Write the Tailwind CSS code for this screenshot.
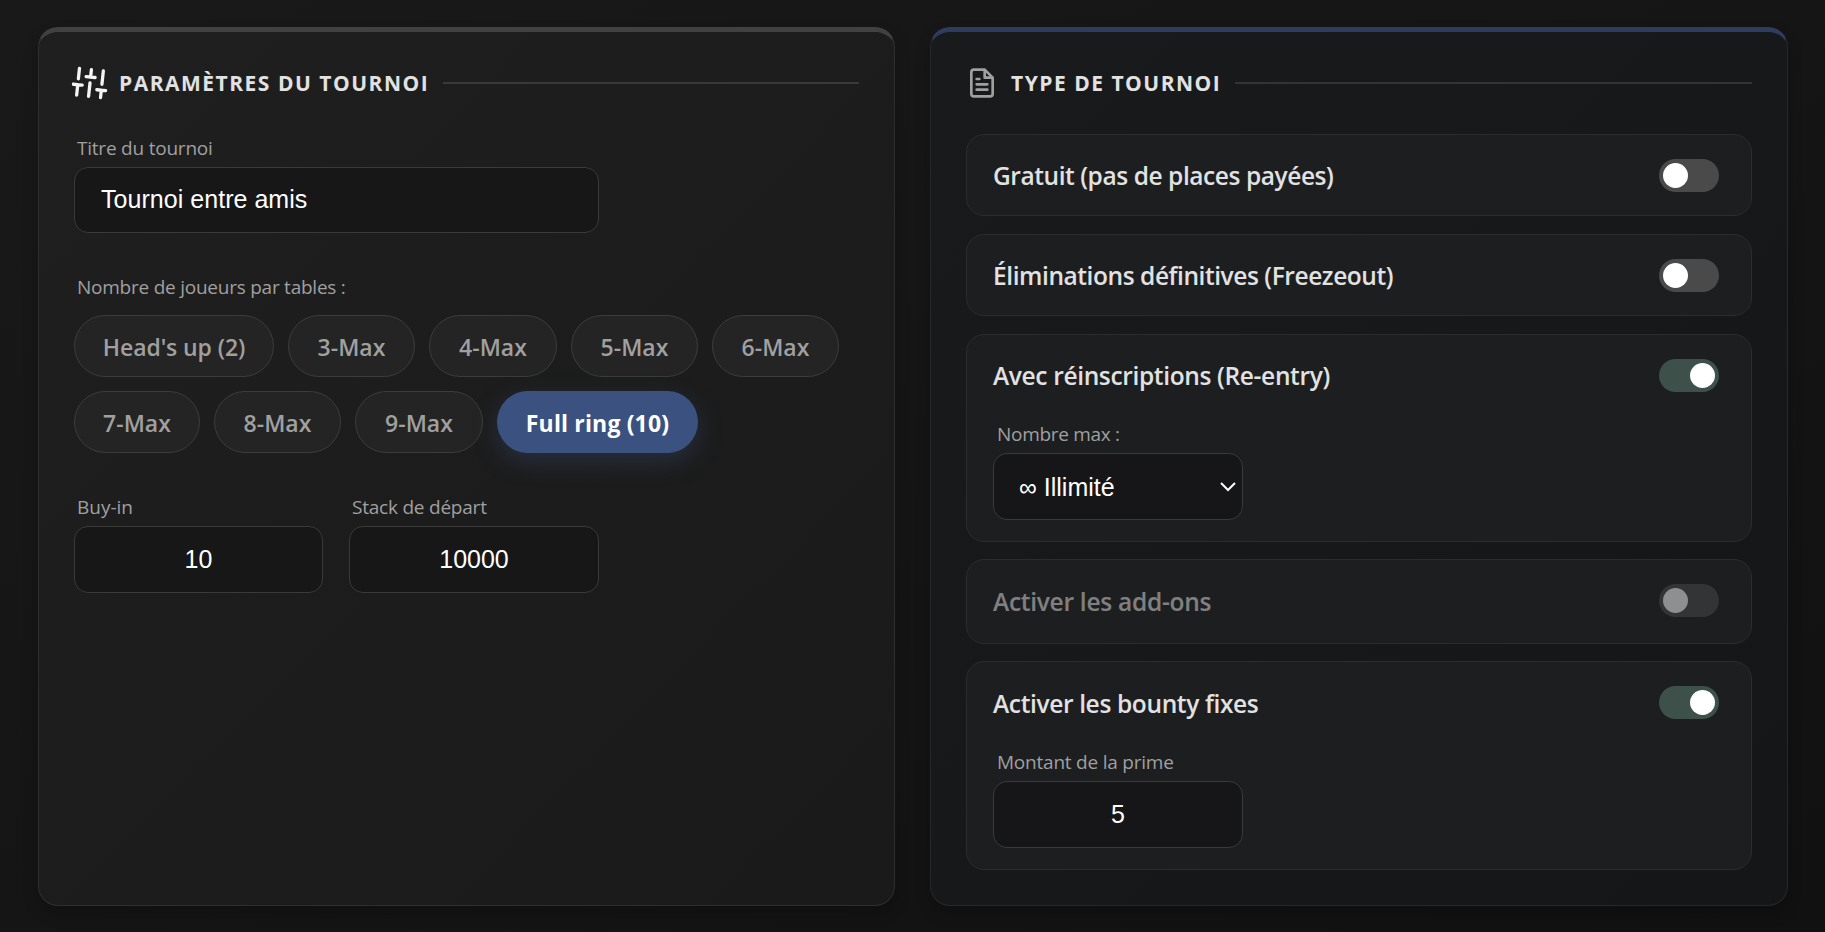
<!DOCTYPE html>
<html lang="fr">

<head>
    <meta charset="UTF-8">
    <meta name="viewport" content="width=device-width, initial-scale=1.0">
    <title>Paramètres du tournoi</title>
    <script src="https://cdn.jsdelivr.net/npm/@tailwindcss/browser@4"></script>
</head>

<body class="w-[1825px] h-[932px] overflow-hidden bg-linear-to-br from-[#191919] to-[#111111] font-['Open_Sans','Noto_Sans',sans-serif] text-[#e2e2e2] whitespace-nowrap">
    <main class="flex gap-[35px] pt-[27px] pl-[38px]">

        <!--Paramètres-->
        <section class="w-[857px] h-[879px] rounded-[20px] border border-t-[5px] border-[#2e2e2e] border-t-[#414141] bg-linear-to-br from-[#1f1f1f] to-[#1a1a1a] px-[35px] pt-[31px] shadow-[0_8px_16px_rgba(0,0,0,0.2)]">
            <div class="flex items-center h-10 mb-[31px]">
                <svg class="w-9 h-9 -ml-0.5 mr-[11px] rotate-6" viewBox="0 0 24 24" fill="none" stroke="#f4f4f4" stroke-width="2.2" stroke-linecap="round">
                    <path d="M4 21v-7M4 10V3M12 21v-9M12 8V3M20 21v-5M20 12V3M1 14h6M9 8h6M17 16h6" />
                </svg>
                <h2 class="pt-0.5 text-[21px] font-bold tracking-[1.5px]">PARAMÈTRES DU TOURNOI</h2>
                <div class="flex-1 h-0.5 ml-[14px] bg-[#393939]"></div>
            </div>

            <label class="block h-7 leading-7 mb-[5px] pl-[3px] text-[19px] tracking-[-0.22px] text-[#a0a0a0]">Titre du tournoi</label>
            <div class="flex items-center w-[525px] h-[66px] rounded-[14px] border border-[#3a3a3a] bg-[#171717] pl-[26px] pb-px font-['Liberation_Sans',sans-serif] text-[25px] tracking-[0.04px] text-white">Tournoi entre amis</div>

            <label class="block h-7 leading-7 mt-10 mb-[14px] pl-[3px] text-[19px] tracking-[-0.24px] text-[#a0a0a0]">Nombre de joueurs par tables :</label>
            <div class="flex flex-col gap-[14px] text-[23px] font-semibold text-[#a0a0a0]">
                <div class="flex gap-[14px] *:flex *:items-center *:justify-center *:h-[62px] *:pt-0.5 *:rounded-full *:border *:border-[#3c3c3c] *:bg-[#242424]">
                    <div class="w-[200px] tracking-[-0.1px]">Head's up (2)</div>
                    <div class="w-[127px]">3-Max</div>
                    <div class="w-[128px]">4-Max</div>
                    <div class="w-[127px]">5-Max</div>
                    <div class="w-[127px]">6-Max</div>
                </div>
                <div class="flex gap-[14px] *:flex *:items-center *:justify-center *:h-[62px] *:pt-0.5 *:rounded-full">
                    <div class="w-[126px] border border-[#3c3c3c] bg-[#242424]">7-Max</div>
                    <div class="w-[127px] border border-[#3c3c3c] bg-[#242424]">8-Max</div>
                    <div class="w-[128px] border border-[#3c3c3c] bg-[#242424]">9-Max</div>
                    <div class="w-[201px] bg-[#3b5280] font-bold text-white tracking-[0.15px] shadow-[0_8px_24px_rgba(59,82,128,0.35)]">Full ring (10)</div>
                </div>
            </div>

            <div class="flex gap-[26px] mt-10">
                <div>
                    <label class="block h-7 leading-7 mb-[5px] pl-[3px] text-[19px] text-[#a0a0a0]">Buy-in</label>
                    <div class="flex items-center justify-center w-[249px] h-[67px] rounded-[14px] border border-[#3a3a3a] bg-[#171717] font-['Liberation_Sans',sans-serif] text-[25px] text-white">10</div>
                </div>
                <div>
                    <label class="block h-7 leading-7 mb-[5px] pl-[3px] text-[19px] tracking-[-0.22px] text-[#a0a0a0]">Stack de départ</label>
                    <div class="flex items-center justify-center w-[250px] h-[67px] rounded-[14px] border border-[#3a3a3a] bg-[#171717] font-['Liberation_Sans',sans-serif] text-[25px] text-white">10000</div>
                </div>
            </div>
        </section>

        <!--Type-->
        <section class="w-[858px] h-[879px] rounded-[20px] border border-t-[5px] border-[#26282c] border-t-[#2f3c60] bg-linear-to-br from-[#191a1c] to-[#151618] px-[35px] pt-[31px] shadow-[0_8px_16px_rgba(0,0,0,0.2)]">
            <div class="flex items-center h-10 mb-[31px]">
                <svg class="w-8 h-8 mr-[13px]" viewBox="0 0 24 24" fill="none" stroke="#a0a0a0" stroke-width="2" stroke-linecap="round" stroke-linejoin="round">
                    <path d="M14 2H6a2 2 0 0 0-2 2v16a2 2 0 0 0 2 2h12a2 2 0 0 0 2-2V8zM14 2v6h6M16 13H8M16 17H8M10 9H8" />
                </svg>
                <h2 class="pt-0.5 text-[21px] font-bold tracking-[1.5px]">TYPE DE TOURNOI</h2>
                <div class="flex-1 h-0.5 ml-[14px] bg-[#333436]"></div>
            </div>

            <div class="h-[82px] mb-[18px] rounded-[18px] border border-[#2b2c2e] bg-[#1d1e20] pt-6 pl-[26px] pr-8">
                <div class="flex items-center justify-between h-[33px] text-[24.5px] font-semibold tracking-[-0.43px]">
                    <span class="pt-0.5">Gratuit (pas de places payées)</span>
                    <div class="flex items-center w-[60px] h-[33px] rounded-full bg-[#4a4a4b] px-1"><i class="size-[25px] rounded-full bg-white"></i></div>
                </div>
            </div>

            <div class="h-[82px] mb-[18px] rounded-[18px] border border-[#2b2c2e] bg-[#1d1e20] pt-6 pl-[26px] pr-8">
                <div class="flex items-center justify-between h-[33px] text-[24.5px] font-semibold tracking-[-0.43px]">
                    <span class="pt-0.5">Éliminations définitives (Freezeout)</span>
                    <div class="flex items-center w-[60px] h-[33px] rounded-full bg-[#4a4a4b] px-1"><i class="size-[25px] rounded-full bg-white"></i></div>
                </div>
            </div>

            <div class="h-[208px] mb-[17px] rounded-[18px] border border-[#2b2c2e] bg-[#1d1e20] pt-6 pl-[26px] pr-8">
                <div class="flex items-center justify-between h-[33px] text-[24.5px] font-semibold tracking-[-0.35px]">
                    <span class="pt-0.5">Avec réinscriptions (Re-entry)</span>
                    <div class="flex items-center justify-end w-[60px] h-[33px] rounded-full bg-[#3d5049] px-1"><i class="size-[25px] rounded-full bg-white"></i></div>
                </div>
                <label class="block h-7 leading-7 mt-7 mb-[5px] pl-1 text-[19px] tracking-[-0.3px] text-[#a0a0a0]">Nombre max :</label>
                <div class="flex items-center justify-between w-[250px] h-[67px] rounded-[14px] border border-[#3a3a3b] bg-[#161618] pt-0.5 pl-[25px] pr-1.5 font-['Liberation_Sans',sans-serif] text-[25px] text-white">
                    <span>∞ Illimité</span>
                    <svg class="w-4 h-[10px] mb-0.5" viewBox="0 0 16 10" fill="none" stroke="#fff" stroke-width="2">
                        <path d="M1 1l7 7 7-7" />
                    </svg>
                </div>
            </div>

            <div class="h-[85px] mb-[17px] rounded-[18px] border border-[#2b2c2e] bg-[#1d1e20] pt-6 pl-[26px] pr-8">
                <div class="flex items-center justify-between h-[33px] text-[24.5px] font-semibold tracking-[-0.27px] opacity-50">
                    <span class="pt-1">Activer les add-ons</span>
                    <div class="flex items-center w-[60px] h-[33px] rounded-full bg-[#4a4a4b] px-1"><i class="size-[25px] rounded-full bg-white"></i></div>
                </div>
            </div>

            <div class="h-[209px] rounded-[18px] border border-[#2b2c2e] bg-[#1d1e20] pt-6 pl-[26px] pr-8">
                <div class="flex items-center justify-between h-[33px] text-[24.5px] font-semibold tracking-[-0.36px]">
                    <span class="pt-1">Activer les bounty fixes</span>
                    <div class="flex items-center justify-end w-[60px] h-[33px] rounded-full bg-[#3d5049] px-1"><i class="size-[25px] rounded-full bg-white"></i></div>
                </div>
                <label class="block h-7 leading-7 mt-[29px] mb-[5px] pl-1 text-[19px] tracking-[-0.22px] text-[#a0a0a0]">Montant de la prime</label>
                <div class="flex items-center justify-center w-[250px] h-[67px] rounded-[14px] border border-[#3a3a3b] bg-[#161618] font-['Liberation_Sans',sans-serif] text-[25px] text-white">5</div>
            </div>
        </section>
    </main>
</body>

</html>
